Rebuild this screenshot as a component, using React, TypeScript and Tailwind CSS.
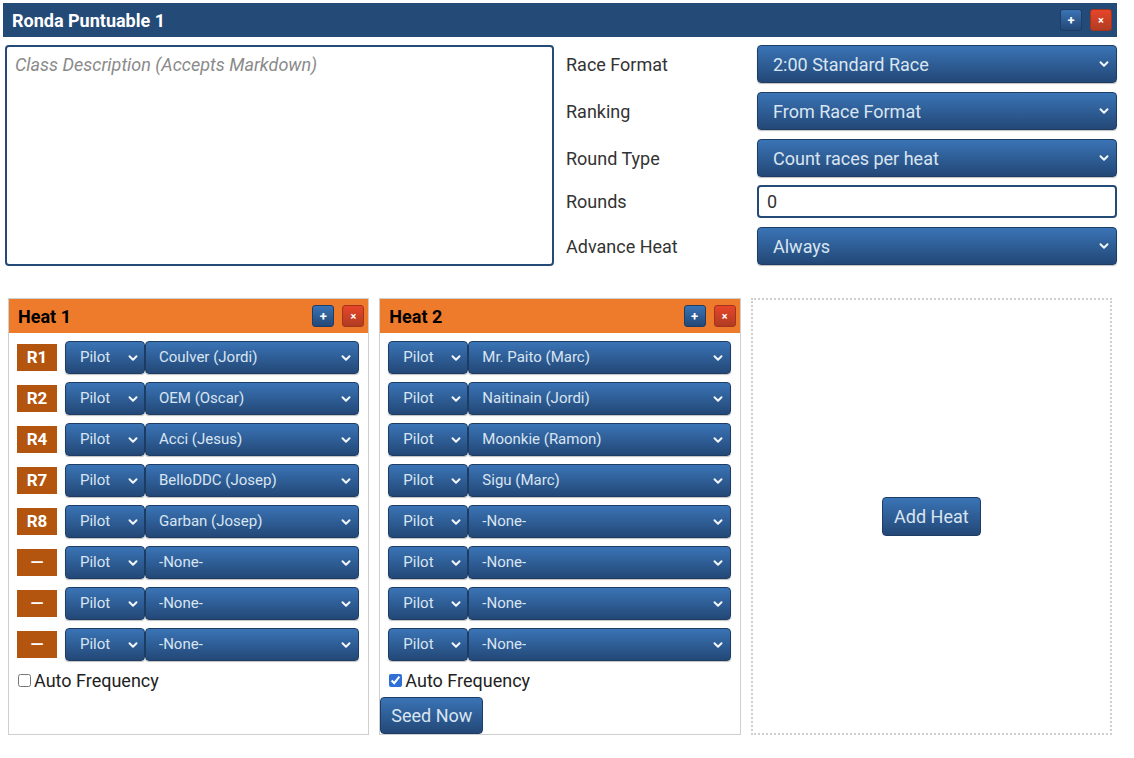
import React from "react";

const FONT = { fontFamily: "Roboto, 'Noto Sans', sans-serif" };

type Slot = { badge?: string; pilot: string };

const HEAT1: Slot[] = [
  { badge: "R1", pilot: "Coulver (Jordi)" },
  { badge: "R2", pilot: "OEM (Oscar)" },
  { badge: "R4", pilot: "Acci (Jesus)" },
  { badge: "R7", pilot: "BelloDDC (Josep)" },
  { badge: "R8", pilot: "Garban (Josep)" },
  { badge: "—", pilot: "-None-" },
  { badge: "—", pilot: "-None-" },
  { badge: "—", pilot: "-None-" },
];

const HEAT2: Slot[] = [
  { pilot: "Mr. Paito (Marc)" },
  { pilot: "Naitinain (Jordi)" },
  { pilot: "Moonkie (Ramon)" },
  { pilot: "Sigu (Marc)" },
  { pilot: "-None-" },
  { pilot: "-None-" },
  { pilot: "-None-" },
  { pilot: "-None-" },
];

function Chevron({ size = 12 }: { size?: number }) {
  return (
    <svg width={size} height={size} viewBox="0 0 12 12" className="shrink-0">
      <path d="M2.5 4.2 L6 7.7 L9.5 4.2" fill="none" stroke="#f2f6fb" strokeWidth="2" strokeLinecap="round" strokeLinejoin="round" />
    </svg>
  );
}

function FakeSelect({ children, className = "" }: { children: React.ReactNode; className?: string }) {
  return (
    <div
      className={`flex items-center justify-between rounded-[4px] border border-[#1d3d64] bg-gradient-to-b from-[#3a74b6] to-[#234877] text-[#d9e5f2] shadow-[0_1px_1px_rgba(0,0,0,0.25)] ${className}`}
    >
      <span className="truncate">{children}</span>
      <Chevron />
    </div>
  );
}

function SmallBtn({ kind }: { kind: "add" | "del" }) {
  return kind === "add" ? (
    <div className="flex h-[22px] w-[22px] items-center justify-center rounded-[3px] border border-[#1d3d64] bg-gradient-to-b from-[#3a74b6] to-[#234877] text-[13px] font-bold leading-none text-white">
      +
    </div>
  ) : (
    <div className="flex h-[22px] w-[22px] items-center justify-center rounded-[3px] border border-[#a3341c] bg-gradient-to-b from-[#e8452a] to-[#b03c22] text-[11px] font-bold leading-none text-white">
      ×
    </div>
  );
}

function Heat({ title, slots, checked, seed }: { title: string; slots: Slot[]; checked?: boolean; seed?: boolean }) {
  return (
    <div className="flex flex-col border border-[#cfcfcf] bg-white">
      <div className="flex h-[34px] items-center justify-between bg-[#ee7b2c] pl-[9px] pr-[4px]">
        <span className="text-[18px] font-bold text-black">{title}</span>
        <div className="flex gap-[8px]">
          <SmallBtn kind="add" />
          <SmallBtn kind="del" />
        </div>
      </div>
      <div className="flex flex-col gap-[8px] pl-[8px] pr-[9px] pt-[8px]">
        {slots.map((s, i) => (
          <div key={i} className="flex h-[33px] items-center">
            {s.badge && (
              <div className="mr-[8px] flex h-[27px] w-[40px] items-center justify-center bg-[#b3550f] text-[17px] font-bold text-white">
                {s.badge}
              </div>
            )}
            <FakeSelect className="h-[33px] w-[80px] pl-[14px] pr-[5px] text-[15px]">Pilot</FakeSelect>
            <FakeSelect className="h-[33px] flex-1 pl-[13px] pr-[6px] text-[15px]">{s.pilot}</FakeSelect>
          </div>
        ))}
      </div>
      <label className="mt-[6px] flex h-[26px] items-center gap-[3px] pl-[9px] text-[18px] text-[#222]">
        <input type="checkbox" defaultChecked={checked} className="h-[13px] w-[13px] accent-[#2f6fd6]" />
        Auto Frequency
      </label>
      {seed && (
        <div className="mt-[4px] flex h-[37px] items-center self-start rounded-[4px] border border-[#1d3d64] bg-gradient-to-b from-[#3a74b6] to-[#234877] px-[10px] text-[18px] text-[#d9e5f2]">
          Seed Now
        </div>
      )}
    </div>
  );
}

export default function App() {
  const rows: { label: string; value: string; input?: boolean }[] = [
    { label: "Race Format", value: "2:00 Standard Race" },
    { label: "Ranking", value: "From Race Format" },
    { label: "Round Type", value: "Count races per heat" },
    { label: "Rounds", value: "0", input: true },
    { label: "Advance Heat", value: "Always" },
  ];

  return (
    <div className="min-h-[758px] w-[1134px] bg-white pt-[3px]" style={FONT}>
      <div className="ml-[3px] w-[1114px]">
        <div className="flex h-[34px] items-center justify-between bg-[#244a77] pl-[9px] pr-[5px]">
          <span className="text-[18px] font-bold text-white">Ronda Puntuable 1</span>
          <div className="flex gap-[8px]">
            <SmallBtn kind="add" />
            <SmallBtn kind="del" />
          </div>
        </div>

        <div className="mt-[8px] flex">
          <div className="ml-[2px] h-[221px] w-[549px] rounded-[4px] border-2 border-[#244a77] px-[8px] py-[4px] text-[18px] italic text-[#8a8a8a]">
            Class Description (Accepts Markdown)
          </div>
          <div className="ml-[12px] flex flex-1 flex-col">
            {rows.map((r, i) => (
              <div key={r.label} className={`flex items-center ${i === 3 ? "h-[33px] mt-[8px]" : i === 4 ? "h-[38px] mt-[9px]" : i === 0 ? "h-[38px]" : "h-[38px] mt-[9px]"}`}>
                <div className="w-[191px] text-[18px] text-[#333]">{r.label}</div>
                {r.input ? (
                  <div className="flex h-[33px] flex-1 items-center rounded-[4px] border-2 border-[#244a77] pl-[8px] text-[18px] text-[#333]">
                    {r.value}
                  </div>
                ) : (
                  <FakeSelect className="h-[38px] flex-1 pl-[15px] pr-[6px] text-[18px]">{r.value}</FakeSelect>
                )}
              </div>
            ))}
          </div>
        </div>

        <div className="ml-[5px] mt-[32px] grid h-[437px] w-[1104px] grid-cols-3 gap-[10px]">
          <Heat title="Heat 1" slots={HEAT1} />
          <Heat title="Heat 2" slots={HEAT2} checked seed />
          <div className="flex items-center justify-center border-2 border-dotted border-[#cfcfcf]">
            <div className="rounded-[4px] border border-[#1d3d64] bg-gradient-to-b from-[#3a74b6] to-[#234877] px-[11px] py-[5px] text-[18px] text-[#d9e5f2]">
              Add Heat
            </div>
          </div>
        </div>
      </div>
    </div>
  );
}
